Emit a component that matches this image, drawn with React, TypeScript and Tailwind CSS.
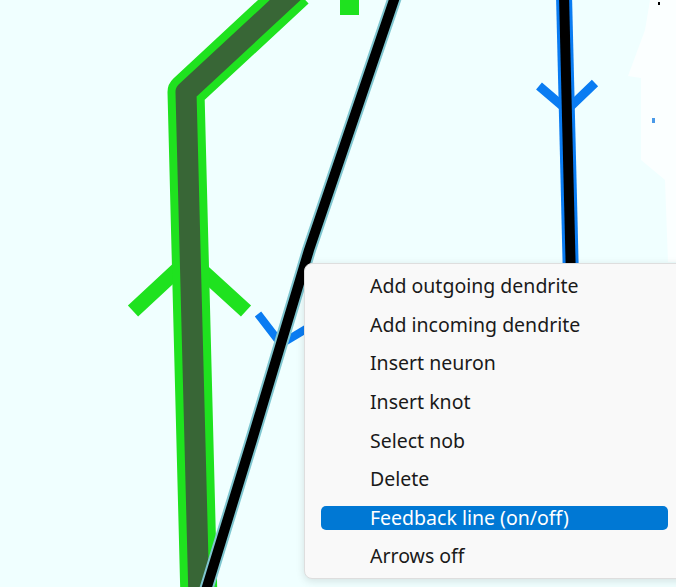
import React from 'react';

const items = [
  'Add outgoing dendrite',
  'Add incoming dendrite',
  'Insert neuron',
  'Insert knot',
  'Select nob',
  'Delete',
  'Feedback line (on/off)',
  'Arrows off',
];

const Canvas: React.FC = () => (
  <svg className="absolute inset-0" width={676} height={587} viewBox="0 0 676 587">
    {/* white smudges on the right */}
    <polygon points="650,0 676,0 676,262 668,262 665,180 641,160 641,78 628,76 645,30" fill="#fbffff" />
    <rect x={658} y={2} width={2} height={3} fill="#000" />
    <rect x={652} y={118} width={3} height={5} fill="#4a9ae8" />

    {/* green dendrite */}
    <polyline points="133,311 189,259 246,311" fill="none" stroke="#1fe21f" strokeWidth={15} />
    <polyline points="296,-10 186,92 199,600" fill="none" stroke="#1fe21f" strokeWidth={37} strokeLinejoin="round" />
    <polyline points="296,-10 186,92 199,600" fill="none" stroke="#386636" strokeWidth={21} strokeLinejoin="round" />
    <rect x={340} y={0} width={19} height={15} fill="#1fe21f" />

    {/* black feedback line */}
    <polyline points="258,314 281,344 306,329" fill="none" stroke="#0a7cf2" strokeWidth={8} />
    <polyline points="396,-6 309,250 252,440 203,600" fill="none" stroke="#7fc6d0" strokeWidth={14} strokeLinejoin="round" />
    <polyline points="396,-6 309,250 252,440 203,600" fill="none" stroke="#000" strokeWidth={10} strokeLinejoin="round" />

    {/* blue axon on the right */}
    <polyline points="539,86 567,110 595,83" fill="none" stroke="#0a7cf2" strokeWidth={9} />
    <line x1={564} y1={-5} x2={571} y2={280} stroke="#0a7cf2" strokeWidth={16} />
    <line x1={564} y1={-5} x2={571} y2={280} stroke="#000" strokeWidth={10} />
  </svg>
);

const ContextMenu: React.FC = () => (
  <div className="absolute left-[304px] top-[263px] w-[390px] h-[316px] rounded-[8px] border border-[#dedede] bg-[#f9f9f9] shadow-[0_2px_8px_rgba(0,0,0,0.12)] pt-[10px] pl-[16px] pr-[16px]">
    <ul className="flex flex-col gap-[14.6px] w-[347px]">
      {items.map((item) => {
        const active = item === 'Feedback line (on/off)';
        return (
          <li
            key={item}
            className={`h-6 flex items-center pl-[49px] rounded-[5px] text-[19.5px] leading-none ${
              active ? 'bg-[#0078d4] text-white' : 'text-[#1a1a1a]'
            }`}
          >
            {item}
          </li>
        );
      })}
    </ul>
  </div>
);

const App: React.FC = () => {
  return (
    <div className="relative w-[676px] h-[587px] overflow-hidden bg-[#f0ffff] font-['Noto_Sans',sans-serif]">
      <Canvas />
      <ContextMenu />
    </div>
  );
};

export default App;
